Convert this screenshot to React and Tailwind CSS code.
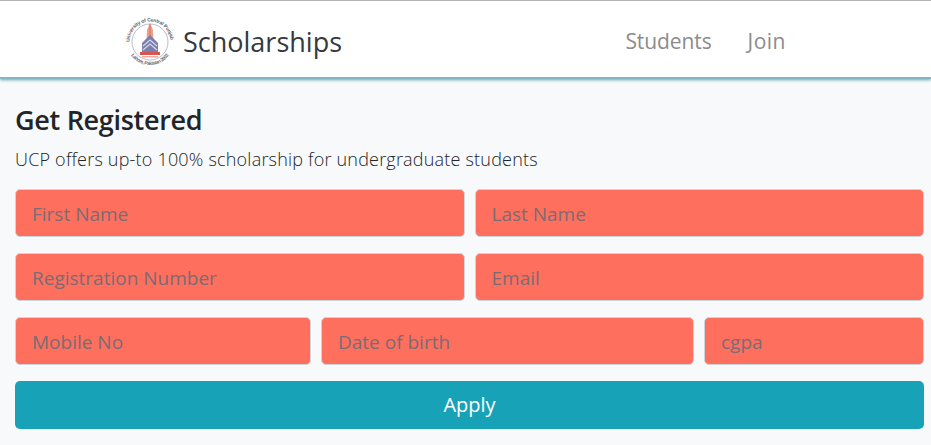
const font = { fontFamily: '"Open Sans", "Noto Sans", sans-serif' };

function Logo() {
  return (
    <svg width="50" height="52" viewBox="0 0 50 52" className="shrink-0">
      <defs>
        <path id="rimTop" d="M4.5 26 A20.5 20.5 0 0 1 45.5 26" />
        <path id="rimBottom" d="M5.1 37.5 A23 23 0 0 0 44.9 37.5" />
      </defs>
      <text fontSize="5" fontWeight="700" fill="#5d5d6b" style={{ fontFamily: '"Liberation Sans", sans-serif' }}>
        <textPath href="#rimTop" textLength="62" startOffset="0">University of Central Punjab</textPath>
      </text>
      <text fontSize="5" fontWeight="700" fill="#6d6d78" style={{ fontFamily: '"Liberation Sans", sans-serif' }}>
        <textPath href="#rimBottom" startOffset="2" textLength="44">Lahore, Pakistan 2002</textPath>
      </text>
      <circle cx="25" cy="26" r="18" fill="#fff" stroke="#a9a9b8" strokeWidth="0.8" />
      <path d="M25 7 L28 14 L28.5 25 L21.5 25 L22 14 Z" fill="#e9a08c" />
      <path d="M25 8 V24" stroke="#d9705c" strokeWidth="1" />
      <path d="M25 19 L33 27 L33 36 L17 36 L17 27 Z" fill="#7b7fae" />
      <path d="M18 30 L25 24 L32 30 M18 34 L25 28 L32 34" stroke="#d8d9e8" strokeWidth="1.1" fill="none" />
      <path d="M15 36 H35 V39 H15 Z" fill="#d9534f" />
      <path d="M17 40 H33 V41.5 H17 Z" fill="#e9aaa4" />
    </svg>
  );
}

function Field({ placeholder, className }) {
  return (
    <input
      placeholder={placeholder}
      style={font}
      className={`h-12 min-w-0 rounded-[5px] border border-[#ced4da] bg-[#ff6f5e] pl-4 pr-4 pt-[2px] text-[19px] text-[#495057] outline-none placeholder:text-[#7a6c72] ${className}`}
    />
  );
}

export default function App() {
  return (
    <div style={font} className="min-h-[445px] bg-[#f8f9fa] text-[#212529]">
      <header className="flex h-[79px] items-center border-t border-[#b5b5b5] bg-white pl-[125px] pr-[145px] pt-[5px] shadow-[0_1px_3px_#5fa6b4] border-b-2 border-b-[#7fb8c4]">
        <Logo />
        <span className="ml-[8px] pt-[2px] text-[27px] font-medium text-[#343a40]">Scholarships</span>
        <nav className="ml-auto flex gap-9 text-[21px] text-[#8c8c8c]">
          <span className="tracking-[-0.1px]">Students</span>
          <span className="tracking-[0.5px]">Join</span>
        </nav>
      </header>
      <main className="pl-[15px] pr-[7px] pt-[24px]">
        <h1 className="text-[27px] font-semibold leading-[34px] tracking-[-0.3px]">Get Registered</h1>
        <p className="mt-[9px] text-[18px] font-light leading-[27px] tracking-[0.2px]">UCP offers up-to 100% scholarship for undergraduate students</p>
        <div className="mt-[16px] flex flex-col gap-4">
          <div className="flex gap-[10px]">
            <Field placeholder="First Name" className="flex-1" />
            <Field placeholder="Last Name" className="flex-1" />
          </div>
          <div className="flex gap-[10px]">
            <Field placeholder="Registration Number" className="flex-1" />
            <Field placeholder="Email" className="flex-1" />
          </div>
          <div className="flex gap-[10px]">
            <Field placeholder="Mobile No" className="w-[296px]" />
            <Field placeholder="Date of birth" className="w-[373px]" />
            <Field placeholder="cgpa" className="w-[220px]" />
          </div>
          <button style={font} className="h-12 rounded-[5px] bg-[#17a2b8] text-[20px] text-white">Apply</button>
        </div>
      </main>
    </div>
  );
}
